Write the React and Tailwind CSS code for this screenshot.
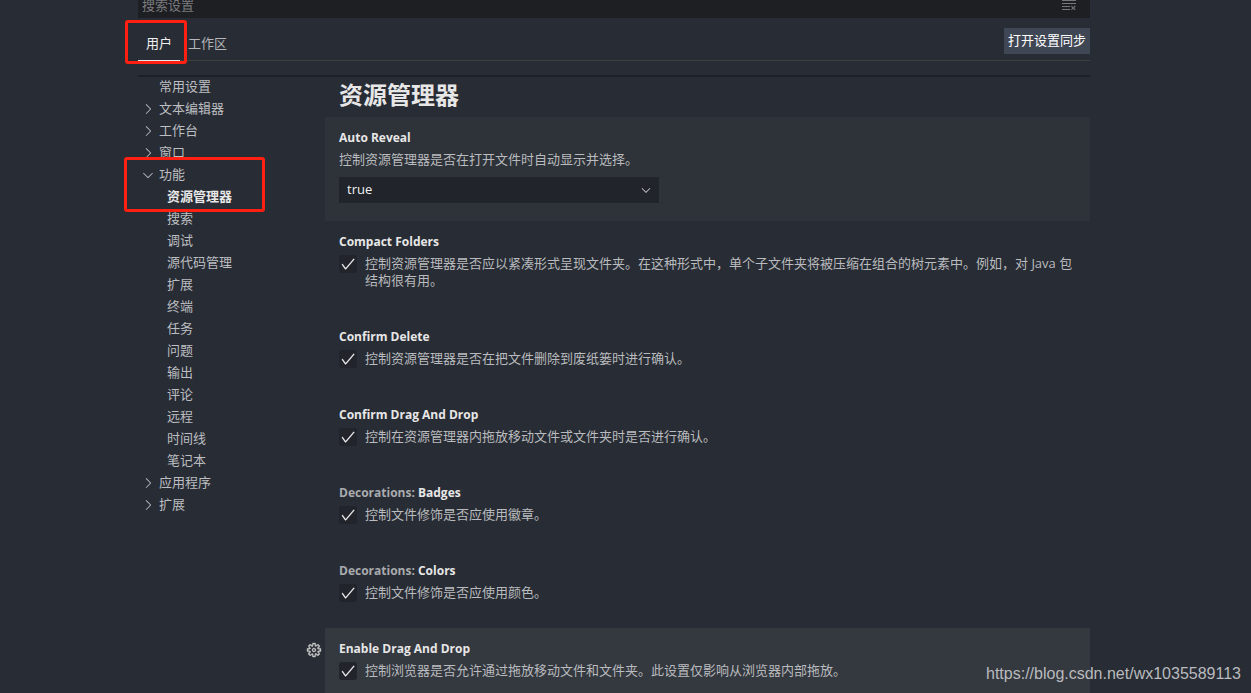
import React, { useState } from "react";
import {
  VscCheck,
  VscChevronDown,
  VscChevronRight,
  VscClearAll,
  VscGear,
} from "react-icons/vsc";

const tocItems = [
  { label: "常用设置" },
  { label: "文本编辑器", children: [] },
  { label: "工作台", children: [] },
  { label: "窗口", children: [] },
  {
    label: "功能",
    expanded: true,
    children: [
      "资源管理器",
      "搜索",
      "调试",
      "源代码管理",
      "扩展",
      "终端",
      "任务",
      "问题",
      "输出",
      "评论",
      "远程",
      "时间线",
      "笔记本",
    ],
  },
  { label: "应用程序", children: [] },
  { label: "扩展", children: [] },
];

const checkboxSettings = [
  {
    id: "compactFolders",
    title: "Compact Folders",
    description:
      "控制资源管理器是否应以紧凑形式呈现文件夹。在这种形式中，单个子文件夹将被压缩在组合的树元素中。例如，对 Java 包结构很有用。",
  },
  {
    id: "confirmDelete",
    title: "Confirm Delete",
    description: "控制资源管理器是否在把文件删除到废纸篓时进行确认。",
  },
  {
    id: "confirmDragAndDrop",
    title: "Confirm Drag And Drop",
    description: "控制在资源管理器内拖放移动文件或文件夹时是否进行确认。",
  },
  {
    id: "badges",
    category: "Decorations: ",
    title: "Badges",
    description: "控制文件修饰是否应使用徽章。",
  },
  {
    id: "colors",
    category: "Decorations: ",
    title: "Colors",
    description: "控制文件修饰是否应使用颜色。",
  },
  {
    id: "enableDragAndDrop",
    title: "Enable Drag And Drop",
    description:
      "控制浏览器是否允许通过拖放移动文件和文件夹。此设置仅影响从浏览器内部拖放。",
    hovered: true,
  },
];

const SearchBar = () => (
  <div className="flex h-[18px] items-end overflow-hidden">
    <div className="flex h-[26px] w-full shrink-0 items-center bg-[#1d1f23] pr-[13px]">
      <input
        type="text"
        aria-label="搜索设置"
        placeholder="搜索设置"
        className="h-full min-w-0 flex-1 bg-transparent px-1 text-[#cccccc] outline-none placeholder:text-[#797a7d]"
      />
      <button type="button" aria-label="清除设置搜索输入" className="text-[#77787b]">
        <VscClearAll className="h-4 w-4" />
      </button>
    </div>
  </div>
);

const Header = () => (
  <div className="flex h-[43px] items-stretch justify-between border-b border-[#3c3f40]">
    <div className="flex items-stretch">
      <div className="relative flex">
        <button
          type="button"
          className="-mb-px border-b border-[#e7e7e7] px-2 pt-[10px] text-[#f0f0f0]"
        >
          用户
        </button>
        <span className="pointer-events-none absolute top-[2px] -right-[7px] -bottom-1 -left-[13px] z-10 rounded-[3px] border-3 border-[#ff2012]" />
      </div>
      <button type="button" className="px-2 pt-[10px] text-[#b4b6b9]">
        工作区
      </button>
    </div>
    <button
      type="button"
      className="mt-[10px] h-[26px] bg-[#404754] px-1 text-white"
    >
      打开设置同步
    </button>
  </div>
);

const TocChild = ({ label, selected, onSelect }) => (
  <button
    type="button"
    onClick={onSelect}
    className={
      selected
        ? "block h-[22px] w-full pl-[29px] text-left font-bold text-[#e7e7e7]"
        : "block h-[22px] w-full pl-[29px] text-left"
    }
  >
    {label}
  </button>
);

const TableOfContents = () => {
  const [selected, setSelected] = useState("资源管理器");

  return (
    <nav className="-mt-px w-[168px] shrink-0 text-[#bcbec1]">
      {tocItems.map((item) => (
        <div key={item.label} className="relative">
          <button type="button" className="flex h-[22px] w-full items-center">
            <span className="flex w-[21px] pl-[2px]">
              {item.children &&
                (item.expanded ? (
                  <VscChevronDown className="h-4 w-4" />
                ) : (
                  <VscChevronRight className="h-4 w-4" />
                ))}
            </span>
            {item.label}
          </button>
          {item.expanded &&
            item.children.map((child) => (
              <TocChild
                key={child}
                label={child}
                selected={child === selected}
                onSelect={() => setSelected(child)}
              />
            ))}
          {item.expanded && (
            <span className="pointer-events-none absolute -top-[7px] -left-[14px] z-10 h-[55px] w-[141px] rounded-[3px] border-3 border-[#ff2012]" />
          )}
        </div>
      ))}
    </nav>
  );
};

const SelectSetting = () => (
  <div className="ml-[19px] bg-[#2e3239] pt-3 pb-[18px] pl-[14px]">
    <label
      htmlFor="autoReveal"
      className="block text-xs leading-[18px] font-bold text-[#e7e7e7]"
    >
      Auto Reveal
    </label>
    <p className="mt-1 leading-[17px]">
      控制资源管理器是否在打开文件时自动显示并选择。
    </p>
    <div className="relative mt-[9px] w-[320px]">
      <select
        id="autoReveal"
        defaultValue="true"
        className="h-[26px] w-full appearance-none bg-[#21242b] px-2 text-[#f0f0f0] outline-none"
      >
        <option>true</option>
        <option>false</option>
        <option>focusNoScroll</option>
      </select>
      <VscChevronDown className="pointer-events-none absolute top-[6px] right-[6px] h-[14px] w-[14px] text-[#d0d0d0]" />
    </div>
  </div>
);

const CheckboxSetting = ({ id, category, title, description, hovered }) => {
  const [checked, setChecked] = useState(true);

  return (
    <div className="flex">
      <div className="w-[19px] shrink-0 pt-[14px]">
        {hovered && (
          <button type="button" aria-label="更多操作" className="block text-[#c5c5c5]">
            <VscGear className="h-4 w-4" stroke="currentColor" strokeWidth="0.4" />
          </button>
        )}
      </div>
      <div
        className={
          hovered
            ? "min-w-0 flex-1 bg-[#34383f] pt-3 pr-3 pb-[27px] pl-[14px]"
            : "min-w-0 flex-1 pt-3 pr-3 pb-[27px] pl-[14px]"
        }
      >
        <h3 className="text-xs leading-[18px] font-bold text-[#e7e7e7]">
          {category && <span className="text-[#a9abae]">{category}</span>}
          {title}
        </h3>
        <div className="mt-1 flex items-start gap-2">
          <div className="relative -mb-px h-[18px] w-[18px] shrink-0">
            <input
              id={id}
              type="checkbox"
              checked={checked}
              onChange={() => setChecked(!checked)}
              className="block h-full w-full appearance-none rounded-[3px] bg-[#21242b]"
            />
            {checked && (
              <VscCheck
                className="pointer-events-none absolute top-px left-px h-4 w-4 text-white"
                stroke="currentColor"
                strokeWidth="0.3"
              />
            )}
          </div>
          <label htmlFor={id} className="leading-[17px]">
            {description}
          </label>
        </div>
      </div>
    </div>
  );
};

export default function App() {
  return (
    <div className="relative h-screen overflow-hidden bg-[#282c34] pr-[23px] font-['Open_Sans','Noto_Sans_CJK_SC',sans-serif] text-[13px] text-[#b9bbbe]">
      <div className="mx-auto max-w-[1000px] px-6">
        <SearchBar />
        <Header />
        <div className="mt-[14px] flex border-t-2 border-[#1d2026]">
          <TableOfContents />
          <main className="min-w-0 flex-1">
            <h2 className="pb-1 pl-[33px] text-2xl leading-9 font-bold text-[#e7e7e7]">
              资源管理器
            </h2>
            <SelectSetting />
            {checkboxSettings.map((setting) => (
              <CheckboxSetting key={setting.id} {...setting} />
            ))}
          </main>
        </div>
      </div>
      <span className="absolute right-[10px] bottom-[7px] font-['Liberation_Sans',sans-serif] text-base text-[#b9bbbe]">
        https://blog.csdn.net/wx1035589113
      </span>
    </div>
  );
}
